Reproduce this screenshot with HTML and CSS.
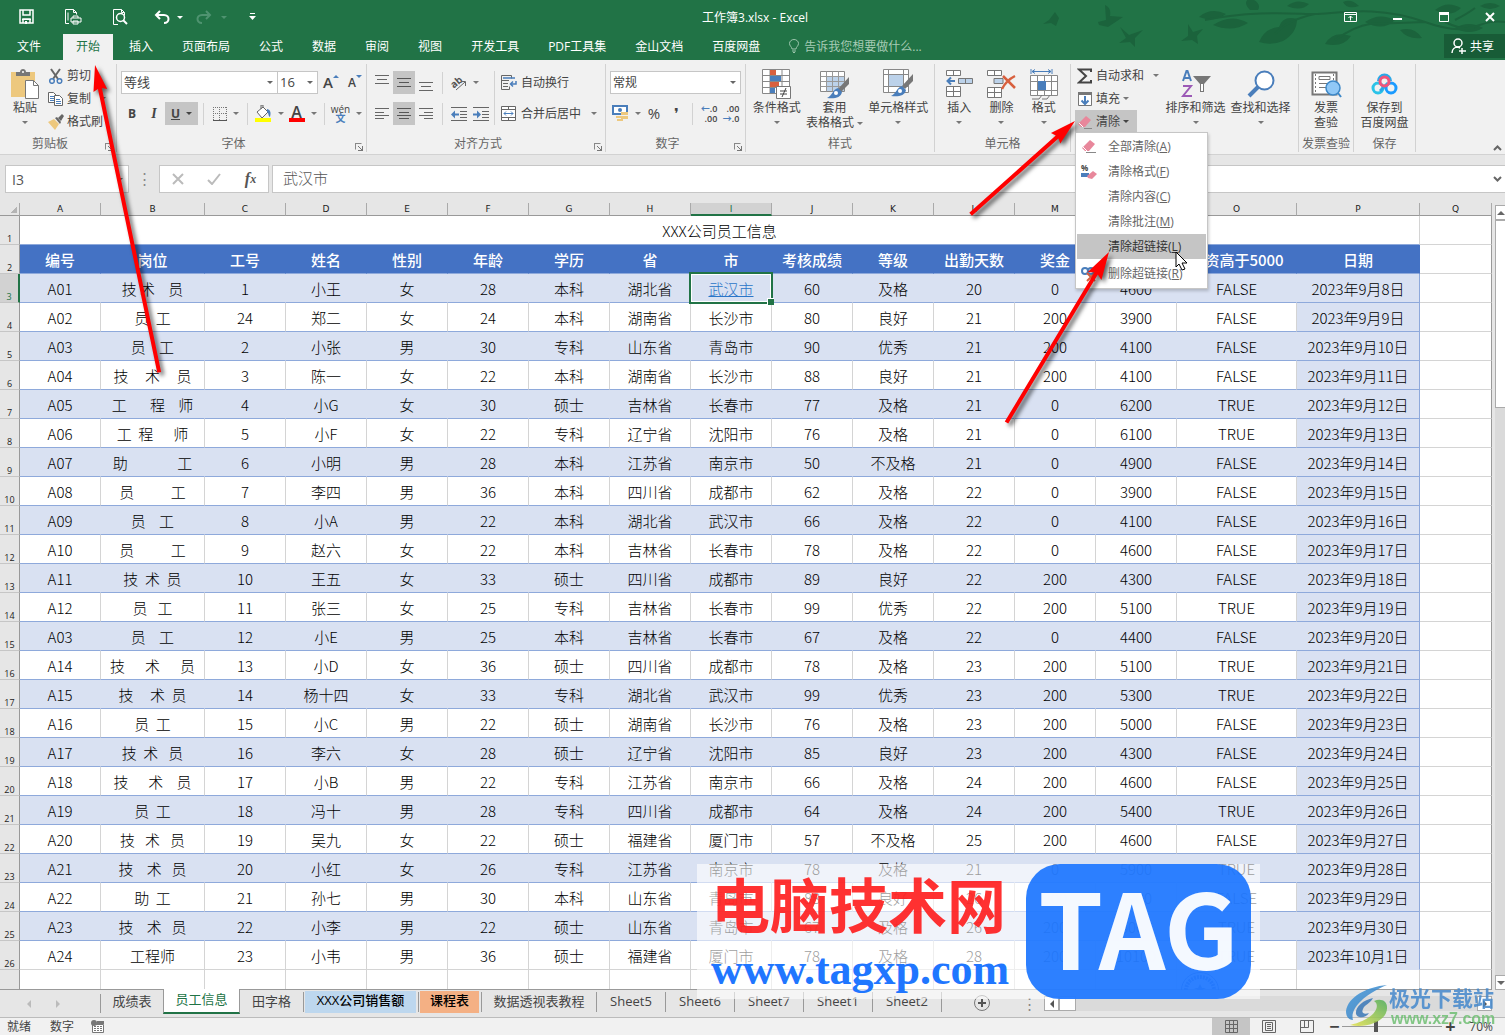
FILE: index.html
```html
<!DOCTYPE html>
<html lang="zh-CN">
<head>
<meta charset="utf-8">
<title>工作簿3.xlsx - Excel</title>
<link rel="stylesheet" href="styles.css">
</head>
<body>
<header class="top">
  <svg class="decor" width="480" height="60" viewBox="0 0 480 60" aria-hidden="true">
    <g fill="#1b633c">
      <path d="M80 5c5 2 6 7 5 11l13 1-9 6-6 4-9-2-1-3 8-2z"/>
      <path d="M95 27l9 8 14-5-8 8 0 9-5-5-11 1 7-5z"/>
      <path d="M163 24l5 8 10-3-6 7 1 8-6-4-11 1 7-5z"/>
      <path d="M30 12l4 6-3 8-5-3-8 1 6-4z"/>
      <path d="M174 17q12-10 27-3q-12 9-27 3zM188 25q18-12 35-2q-16 10-35 2zM225 10q-8-8 0-12q12 5 8 12zM234 42q6-14 20-15q4-12 18-8q0 14-14 22q-12 5-24 1zM300 44q8-14 26-8q-8 12-26 8zM340 22q14-10 30-2q-12 12-30 2zM375 30q14-4 22 8q-14 2-22-8zM262 6q10-8 22-2q-8 8-22 2zM410 10q12-10 26-2q-10 10-26 2zM318 2q8-4 16 4q-12 4-16-4zM430 28q14-8 28 0q-14 8-28 0zM455 6q10-6 20 0q-10 6-20 0z"/>
    </g>
    <path d="M180 20C230 10 270 14 290 14S350 4 400 22S450 18 480 22M250 34Q262 20 290 14M310 40Q330 26 345 24L400 22M420 22q16 8 30 7M430 20q12-6 20-12" fill="none" stroke="#1b633c" stroke-width="2"/>
  </svg>
  <div class="titlebar">
    <div class="quick">
      <button class="q-save" aria-label="保存"><svg width="16" height="16" viewBox="0 0 16 16"><path d="M1 1h13v13H1zM4 1v5h7V1M4 14v-4h7v4" fill="none" stroke="#fff" stroke-width="1.500"/><path d="M3 10h9v1H3zM6 12h2v3H6z" fill="#fff"/></svg></button>
      <button class="q-print" aria-label="打印"><svg width="17" height="16" viewBox="0 0 17 16" fill="none" stroke="#fff"><path d="M4 14.500H.5V.500h8l3 3v2M8.500.500v3h3M3 3.500v8"/><path d="M6 9h10v4H6zM8 9V7h5v2M8 12h5v3H8z"/></svg></button>
      <button class="q-preview" aria-label="打印预览"><svg width="15" height="16" viewBox="0 0 15 16" fill="none" stroke="#fff"><path d="M5 15.500H.5V.500h8l3 3v3M8.500.500v3h3"/><circle cx="7.500" cy="8.500" r="4" stroke-width="1.500"/><path d="M10 11l4 4" stroke-width="2"/></svg></button>
      <button class="q-undo" aria-label="撤销"><svg width="17" height="14" viewBox="0 0 17 14" fill="none" stroke="#fff" stroke-width="2"><path d="M6 1L2 5l4 4M2 5h8c6 0 6 8 0 8"/></svg></button>
      <span class="caret white"></span>
      <button class="q-redo" aria-label="恢复"><svg width="17" height="14" viewBox="0 0 17 14" fill="none" stroke="#4f9370" stroke-width="2"><path d="M10 1l4 4-4 4M14 5H6c-6 0-6 8 0 8"/></svg></button>
      <span class="caret dim"></span>
      <button class="q-more" aria-label="自定义快速访问工具栏"><svg width="7" height="8" viewBox="0 0 7 8"><path d="M1 0h5v1H1zM0 3h7L3.500 7z" fill="#fff"/></svg></button>
    </div>
    <div class="doc-title">工作簿3.xlsx - Excel</div>
    <div class="win">
      <button aria-label="功能区显示选项"><svg width="13" height="10" viewBox="0 0 13 10" fill="none" stroke="#fff"><path d="M.5.500h12v9H.5zM.5 2.500h12M6.500 8.500V4M4.500 6l2-2 2 2"/></svg></button>
      <button aria-label="最小化"><svg width="10" height="10"><path d="M0 6h9v2H0z" fill="#fff"/></svg></button>
      <button aria-label="最大化"><svg width="10" height="10"><path d="M.5.500h9v9H.5z" fill="none" stroke="#fff"/><path d="M0 0h10v3H0z" fill="#fff"/></svg></button>
      <button aria-label="关闭"><svg width="10" height="10"><path d="M1 1l8 8M9 1l-8 8" stroke="#fff" stroke-width="2"/></svg></button>
    </div>
  </div>
  <nav class="tabs">
    <button class="file">文件</button>
    <button class="active">开始</button>
    <button>插入</button><button>页面布局</button><button>公式</button><button>数据</button><button>审阅</button><button>视图</button><button>开发工具</button><button>PDF工具集</button><button>金山文档</button><button>百度网盘</button>
    <button class="tell"><svg width="10" height="14" viewBox="0 0 10 14" fill="none" stroke="#9cc5ac"><path d="M3 10c0-2-2.500-3-2.500-5.500a4.500 4 0 0 1 9 0C9.500 7 7 8 7 10zM3 12h4M4 13.500h2"/></svg>告诉我您想要做什么...</button>
    <button class="share"><svg width="16" height="16" viewBox="0 0 16 16" fill="none" stroke="#fff" stroke-width="1.500"><circle cx="7" cy="5" r="4"/><path d="M1 15c0-4 3-6 6-6l2 1M11 10v6M8 13h7"/></svg>共享</button>
  </nav>
</header>

<section class="ribbon">
  <div class="group g-clip">
    <div class="body">
      <button class="big paste"><span class="pic"><svg width="29" height="30" viewBox="0 0 29 30"><path d="M0 3h24v25H0z" fill="#edc87e"/><path d="M5 7V3h4c0-4 6-4 6 0h4v4z" fill="#777"/><circle cx="12" cy="3" r="1" fill="#fff"/><path d="M14.500 11.500h8l5 5v13h-13z" fill="#fff" stroke="#777"/><path d="M22.500 11.500v5h5" fill="none" stroke="#777"/></svg></span>粘贴<span class="caret"></span></button>
      <div class="list">
        <button><svg width="16" height="16" viewBox="0 0 16 16" fill="none"><path d="M3 1l7 10M12 1L5 11" stroke="#666" stroke-width="2"/><circle cx="4" cy="13" r="2.300" stroke="#4a7ebb" stroke-width="1.500"/><circle cx="11.500" cy="13" r="2.300" stroke="#4a7ebb" stroke-width="1.500"/></svg>剪切</button>
        <button><svg width="16" height="16" viewBox="0 0 16 16" fill="#fff" stroke="#666"><path d="M.5 1.500h5l3 3v7h-8z"/><path d="M2 5.500h4M2 7.500h4M2 9.500h4" stroke="#4a7ebb"/><path d="M6.500 4.500h5l3 3v7h-8z"/><path d="M8 8.500h4M8 10.500h5M8 12.500h5" stroke="#4a7ebb"/></svg>复制<span class="caret far"></span></button>
        <button><svg width="16" height="16" viewBox="0 0 16 16"><path d="M0 8l6-3 5 5-4 6z" fill="#edc87e"/><path d="M7 4l2-1 4 5-1 2zM10 4l4-4 2 2-3 5z" fill="#666"/></svg>格式刷</button>
      </div>
    </div>
    <div class="name">剪贴板<span class="launch"></span></div>
  </div>

  <div class="group g-font">
    <div class="body rows">
      <div class="row">
        <span class="sel w-font"><select aria-label="字体"><option>等线</option></select></span><span class="sel w-size"><select aria-label="字号"><option>16</option></select></span>
        <button class="t22 glyph" aria-label="增大字号">A<i class="up"></i></button><button class="t22 glyph small" aria-label="减小字号">A<i class="down"></i></button>
      </div>
      <div class="row">
        <button class="t22 b">B</button><button class="t22 i">I</button><button class="t33 u on"><u>U</u><span class="caret dark"></span></button>
        <span class="vs"></span>
        <button class="t33" aria-label="边框"><svg width="14" height="14" viewBox="0 0 14 14"><path d="M.5 0v13M6.500 0v13M13.500 0v13M0 .5h14M0 6.500h14" stroke="#777" stroke-dasharray="1 1"/><path d="M0 13.500h14" stroke="#555"/></svg><span class="caret"></span></button>
        <span class="vs"></span>
        <button class="t33" aria-label="填充颜色"><svg width="17" height="17" viewBox="0 0 17 17"><path d="M2 7l6-5 5 5-6 6z" fill="#fff" stroke="#666"/><path d="M6 4V0h2v3" fill="none" stroke="#666"/><path d="M12 4c4 1 4 4 3 8-2-1-1-4-3-5z" fill="#4a7ebb"/><path d="M0 13h16v4H0z" fill="#ff0"/></svg><span class="caret"></span></button>
        <button class="t33" aria-label="字体颜色"><span class="fontcolor">A</span><span class="caret"></span></button>
        <span class="vs"></span>
        <button class="t33" aria-label="拼音"><span class="pinyin">wén<b>文</b></span><span class="caret"></span></button>
      </div>
    </div>
    <div class="name">字体<span class="launch"></span></div>
  </div>

  <div class="group g-align">
    <div class="body">
      <div class="rows">
        <div class="row">
          <button class="t22" aria-label="顶端对齐"><svg width="14" height="17"><path d="M0 1.500h14M2 5.500h10M0 9.500h14" stroke="#666"/></svg></button>
          <button class="t22 on" aria-label="垂直居中"><svg width="14" height="17"><path d="M0 4.500h14M2 8.500h10M0 12.500h14" stroke="#555"/></svg></button>
          <button class="t22" aria-label="底端对齐"><svg width="14" height="17"><path d="M0 8.500h14M2 12.500h10M0 16.500h14" stroke="#666"/></svg></button>
          <span class="vs"></span>
          <button class="t33" aria-label="方向"><svg class="spill" width="17" height="16" viewBox="0 0 17 16"><text x="1" y="12" font-family="Open Sans" font-size="10" font-weight="700" fill="#555" transform="rotate(-40 5 9)">ab</text><path d="M6 15l9-8M11 6.500h4.500V11" fill="none" stroke="#666"/></svg><span class="caret"></span></button>
        </div>
        <div class="row">
          <button class="t22" aria-label="左对齐"><svg width="14" height="14"><path d="M0 1.500h14M0 5.500h9M0 8.500h14M0 11.500h9" stroke="#666"/></svg></button>
          <button class="t22 on" aria-label="居中"><svg width="14" height="14"><path d="M0 1.500h14M2 5.500h10M0 8.500h14M2 11.500h10" stroke="#555"/></svg></button>
          <button class="t22" aria-label="右对齐"><svg width="14" height="14"><path d="M0 1.500h14M5 5.500h9M0 8.500h14M5 11.500h9" stroke="#666"/></svg></button>
          <span class="vs"></span>
          <button class="t22" aria-label="减少缩进量"><svg width="16" height="14"><path d="M0 .5h16M9 4.500h7M9 7.500h7M9 10.500h7M0 13.500h16" stroke="#666"/><path d="M0 7.500l4-4v3h4v2H4v3z" fill="#4a7ebb"/></svg></button>
          <button class="t22" aria-label="增加缩进量"><svg width="16" height="14"><path d="M0 .5h16M9 4.500h7M9 7.500h7M9 10.500h7M0 13.500h16" stroke="#666"/><path d="M8 7.500l-4-4v3H0v2h4v3z" fill="#4a7ebb"/></svg></button>
        </div>
      </div>
      <div class="rows wraps">
        <button class="row"><svg width="16" height="16" viewBox="0 0 16 16" fill="none" stroke="#666"><path d="M.5.500h10v3M.5.500v14h8v-3M0 5.500h8M2 8.500h5M2 11.500h5"/><path d="M2 3h12M15 6v3h-5M12 6.500L9.500 9l2.500 2.500" stroke="#4a7ebb" stroke-width="1.500"/></svg>自动换行</button>
        <button class="row"><svg width="16" height="16" viewBox="0 0 16 16" fill="#fff" stroke="#666"><path d="M.5.500h14v14H.5zM.5 3.500h14M.5 11.500h14M7.500.500v3M7.500 11.500v3"/><path d="M3 7.500h9M5 5.500l-2 2 2 2M10 5.500l2 2-2 2" fill="none" stroke="#4a7ebb"/></svg>合并后居中<span class="caret"></span></button>
      </div>
    </div>
    <div class="name">对齐方式<span class="launch"></span></div>
  </div>

  <div class="group g-num">
    <div class="body rows">
      <div class="row"><span class="sel w-num"><select aria-label="数字格式"><option>常规</option></select></span></div>
      <div class="row">
        <button class="t33" aria-label="会计数字格式"><svg width="17" height="17" viewBox="0 0 17 17"><path d="M1 1h14v8H1z" fill="#fff" stroke="#4a7ebb" stroke-width="2"/><circle cx="8" cy="5" r="2" fill="#4a7ebb"/><path d="M9 7h7v3H9zM4 11h7v2H4zM9 11h7v3H9zM5 14h6v2H5z" fill="#edc87e"/></svg><span class="caret"></span></button>
        <button class="t22 pct">%</button><button class="t22 comma" aria-label="千位分隔样式">❜</button>
        <span class="vs"></span>
        <button class="t22 dec"><span><i>←</i>.0<br>.00</span></button><button class="t22 dec"><span>.00<br><i>→</i>.0</span></button>
      </div>
    </div>
    <div class="name">数字<span class="launch"></span></div>
  </div>

  <div class="group g-style">
    <div class="body">
      <button class="big"><span class="pic"><svg width="30" height="30" viewBox="0 0 30 30"><path d="M.5.500h27v24H.5zM.5 6.500h27M.5 12.500h27M.5 18.500h27M8 .5v24M20 .5v24" fill="#fff" stroke="#888"/><path d="M8 1h6v5H8zM8 13h9v5H8z" fill="#d8603e"/><path d="M8 7h11v5H8zM8 19h5v5H8z" fill="#4a7ebb"/><path d="M14.500 17.500h14v12h-14z" fill="#fff" stroke="#777"/><path d="M18 22h7M18 25h7M24 19l-4 9" stroke="#444"/></svg></span>条件格式<span class="caret"></span></button>
      <button class="big"><span class="pic"><svg width="30" height="30" viewBox="0 0 30 30"><path d="M.5 2.500h24v20H.5z" fill="#fff" stroke="#888"/><path d="M6 8h18v14H6z" fill="#bcd2ea"/><path d="M.5 7.500h24M.5 12.500h24M.5 17.500h24M6.500 2.500v20M12.500 2.500v20M18.500 2.500v20" stroke="#999"/><path d="M29 8v7l-8 8-3-3z" fill="#777"/><path d="M18 19l4 4c-1 6-8 7-15 6 5-2 6-9 11-10z" fill="#4a7ebb"/><circle cx="16" cy="24" r="2" fill="#fff"/></svg></span>套用<span>表格格式 <i class="caret inl"></i></span></button>
      <button class="big"><span class="pic"><svg width="30" height="30" viewBox="0 0 30 30"><path d="M.5.500h25v23H.5zM.5 5.500h25M.5 17.500h25M5.500.500v23M20.500.500v23" fill="#fff" stroke="#888"/><path d="M6 6h14v11H6z" fill="#bcd2ea"/><path d="M30 5v7l-8 8-3-3z" fill="#777"/><path d="M19 17l4 4c-1 6-8 7-15 6 5-2 6-9 11-10z" fill="#4a7ebb"/><circle cx="17" cy="22" r="2" fill="#fff"/></svg></span>单元格样式<span class="caret"></span></button>
    </div>
    <div class="name">样式</div>
  </div>

  <div class="group g-cells">
    <div class="body">
      <button class="big"><span class="pic"><svg width="27" height="30" viewBox="0 0 27 30"><path d="M.5 1.500h14v5H.5zM7.500 1.500v5M.5 17.500h14v10H.5zM.5 22.500h14M7.500 17.500v10" fill="#fff" stroke="#777"/><path d="M12.500 9.500h14v5h-14zM19.500 9.500v5" fill="#bcd2ea" stroke="#777"/><path d="M1 12h8M5 8.500L1.500 12 5 15.500" fill="none" stroke="#4a7ebb" stroke-width="2"/></svg></span>插入<span class="caret"></span></button>
      <button class="big"><span class="pic"><svg width="29" height="30" viewBox="0 0 29 30"><path d="M.5 1.500h14v5H.5zM7.500 1.500v5M.5 18.500h14v10H.5zM.5 23.500h14M7.500 18.500v10" fill="#fff" stroke="#777"/><path d="M7 9.500h9v5H7z" fill="#bcd2ea" stroke="#777"/><path d="M16 7l12 12M28 7C22 10 18 14 15 20" fill="none" stroke="#d8603e" stroke-width="2.500"/></svg></span>删除<span class="caret"></span></button>
      <button class="big"><span class="pic"><svg width="28" height="31" viewBox="0 0 28 31"><path d="M.5 6.500h27v20H.5zM.5 12.500h27M.5 21.500h27M7.500 6.500v20M21.500 6.500v20M14.500 6.500v20" fill="#fff" stroke="#888"/><path d="M8 12h8v9H8z" fill="#4a7ebb"/><path d="M1 0v5M22 0v5M2 2.500h19M5 .5l-3 2 3 2M18 .5l3 2-3 2" fill="none" stroke="#4a7ebb"/><path d="M2 30h7l3-4M12 30h5l3-4" fill="none" stroke="#777"/></svg></span>格式<span class="caret"></span></button>
    </div>
    <div class="name">单元格</div>
  </div>

  <div class="group g-edit">
    <div class="body">
      <div class="list">
        <button><svg width="16" height="16" viewBox="0 0 16 16"><path d="M14 4V1.500H2L9 8l-7 6.500h12V12" fill="none" stroke="#444" stroke-width="2"/></svg>自动求和<span class="caret far"></span></button>
        <button><svg width="16" height="16" viewBox="0 0 16 16"><path d="M1.500 1.500h13v13h-13z" fill="#fff" stroke="#777"/><path d="M1 1h14v3H1z" fill="#777"/><path d="M8 5v8M4.500 9.500L8 13l3.500-3.500" fill="none" stroke="#4a7ebb" stroke-width="2"/></svg>填充<span class="caret"></span></button>
        <div class="drop">
          <button class="on"><svg width="16" height="16" viewBox="0 0 16 16"><path d="M9 2l5 4-6 7H4l-3-3z" fill="#e8879b"/><path d="M2 9l4 4" stroke="#fff"/><path d="M7 14.500h8" stroke="#888"/></svg>清除<span class="caret dark"></span></button>
          <ul class="menu">
            <li><button><svg width="16" height="16" viewBox="0 0 16 16"><path d="M9 1l5 4-6 7H4l-3-3z" fill="#e8879b"/><path d="M2 8l4 4" stroke="#fff"/><path d="M5 13.500h10" stroke="#888"/></svg>全部清除(<u>A</u>)</button></li>
            <li><button><svg class="spill" width="16" height="16" viewBox="0 0 16 16"><text x="0" y="7" font-family="Open Sans" font-size="8" font-weight="700" fill="#444">%</text><path d="M0 9h8v4H0z" fill="#4a7ebb"/><path d="M12 7l4 3-5 5-4-1-1-2z" fill="#e8879b"/></svg>清除格式(<u>F</u>)</button></li>
            <li><button><i class="noicon"></i>清除内容(<u>C</u>)</button></li>
            <li><button><i class="noicon"></i>清除批注(<u>M</u>)</button></li>
            <li class="hot"><button><i class="noicon"></i>清除超链接(<u>L</u>)</button></li>
            <li class="last"><button><svg width="16" height="16" viewBox="0 0 16 16" fill="none"><circle cx="4" cy="5" r="3" stroke="#4a7ebb" stroke-width="2"/><circle cx="10" cy="5" r="3" stroke="#4a7ebb" stroke-width="2"/><path d="M6 7l8 8M14 7l-8 8" stroke="#d8603e" stroke-width="2"/></svg>删除超链接(<u>R</u>)</button></li>
          </ul>
        </div>
      </div>
      <button class="big"><span class="pic"><svg width="30" height="30" viewBox="0 0 30 30"><path d="M2 12L5.500 2h1L10 12M3.500 9h5" fill="none" stroke="#4a7ebb" stroke-width="2"/><path d="M2 17h8L2 27h9" fill="none" stroke="#9b59b6" stroke-width="2"/><path d="M12 7h18l-7 8v8h-4v-8z" fill="#777"/><path d="M20 15h2v7h-2z" fill="#fff"/></svg></span>排序和筛选<span class="caret"></span></button>
      <button class="big"><span class="pic"><svg width="28" height="28" viewBox="0 0 28 28"><circle cx="17.500" cy="10.500" r="9" fill="#fff" stroke="#4a7ebb" stroke-width="2"/><path d="M11 17l-9 9" stroke="#4a7ebb" stroke-width="4"/></svg></span>查找和选择<span class="caret"></span></button>
    </div>
    <div class="name"></div>
  </div>

  <div class="group g-inv">
    <div class="body"><button class="big"><span class="pic"><svg width="31" height="27" viewBox="0 0 31 27"><path d="M1.500 1.500h24v22h-24z" fill="#fff" stroke="#777" stroke-width="2"/><path d="M4.500 3v20M22.500 3v20" stroke="#777" stroke-dasharray="2 2"/><path d="M8 5.500h11v3H8zM8 12.500h8M8 16.500h8" fill="none" stroke="#777"/><circle cx="22" cy="17" r="7" fill="#90c8f6" stroke="#3d88c8" stroke-width="1.500"/><path d="M27 22l3 4" stroke="#3d88c8" stroke-width="2"/></svg></span>发票<span>查验</span></button></div>
    <div class="name">发票查验</div>
  </div>
  <div class="group g-save">
    <div class="body"><button class="big"><span class="pic"><svg width="27" height="22" viewBox="0 0 27 22" fill="none" stroke-width="3"><circle cx="7" cy="15" r="5" stroke="#2bc3e8"/><circle cx="20" cy="15" r="5" stroke="#1b9bff"/><path d="M7.500 8a6 6 0 0 1 12 0" stroke="#2aa9e8"/><path d="M9 18l8-8" stroke="#2aa9e8"/><circle cx="13.500" cy="8.500" r="4.500" stroke="#f0557b"/></svg></span>保存到<span>百度网盘</span></button></div>
    <div class="name">保存</div>
  </div>
  <button class="collapse" aria-label="折叠功能区"><svg width="9" height="6"><path d="M1 5l3.500-3.500L8 5" fill="none" stroke="#666" stroke-width="2"/></svg></button>
</section>

<section class="formula">
  <span class="namebox"><input value="I3" aria-label="名称框"><span class="caret"></span></span>
  <span class="dots">⋮</span>
  <span class="fx">
    <button aria-label="取消"><svg width="12" height="12"><path d="M1 1l10 10M11 1L1 11" stroke="#bbb" stroke-width="2"/></svg></button>
    <button aria-label="输入"><svg width="14" height="12"><path d="M1 7l4 4 8-10" fill="none" stroke="#bbb" stroke-width="2"/></svg></button>
    <button class="f"><i>f</i>x</button>
  </span>
  <input class="finput" value="武汉市" aria-label="编辑栏">
  <button class="expand" aria-label="展开编辑栏"><svg width="9" height="6"><path d="M1 1l3.500 3.500L8 1" fill="none" stroke="#666" stroke-width="2"/></svg></button>
</section>

<main class="sheet">
<table>
<colgroup><col class="ch"><col class="cn"><col class="cb"><col class="cn"><col class="cn"><col class="cn"><col class="cn"><col class="cn"><col class="cn"><col class="cn"><col class="cn"><col class="cn"><col class="cn"><col class="cn"><col class="cn"><col class="co"><col class="cp"><col></colgroup>
<thead><tr><th class="corner"><th>A<th>B<th>C<th>D<th>E<th>F<th>G<th>H<th class="cur">I<th>J<th>K<th>L<th>M<th>N<th>O<th>P<th>Q</tr></thead>
<tbody>
<tr class="title"><th>1<td colspan="16">XXX公司员工信息<td></tr>
<tr class="head"><th>2<td>编号<td>岗位<td>工号<td>姓名<td>性别<td>年龄<td>学历<td>省<td>市<td>考核成绩<td>等级<td>出勤天数<td>奖金<td>工资<td>工资高于5000<td>日期<td></tr>
<tr class="cur"><th>3<td>A01<td>技 术    员<td>1<td>小王<td>女<td>28<td>本科<td>湖北省<td class="picked"><a href="#">武汉市</a><td>60<td>及格<td>20<td>0<td>4600<td>FALSE<td>2023年9月8日<td></tr>
<tr><th>4<td>A02<td>员  工<td>24<td>郑二<td>女<td>24<td>本科<td>湖南省<td>长沙市<td>80<td>良好<td>21<td>200<td>3900<td>FALSE<td>2023年9月9日<td></tr>
<tr><th>5<td>A03<td>员    工<td>2<td>小张<td>男<td>30<td>专科<td>山东省<td>青岛市<td>90<td>优秀<td>21<td>200<td>4100<td>FALSE<td>2023年9月10日<td></tr>
<tr><th>6<td>A04<td>技     术     员<td>3<td>陈一<td>女<td>22<td>本科<td>湖南省<td>长沙市<td>88<td>良好<td>21<td>200<td>4100<td>FALSE<td>2023年9月11日<td></tr>
<tr><th>7<td>A05<td>工       程    师<td>4<td>小G<td>女<td>30<td>硕士<td>吉林省<td>长春市<td>77<td>及格<td>21<td>0<td>6200<td>TRUE<td>2023年9月12日<td></tr>
<tr><th>8<td>A06<td>工  程      师<td>5<td>小F<td>女<td>22<td>专科<td>辽宁省<td>沈阳市<td>76<td>及格<td>21<td>0<td>6100<td>TRUE<td>2023年9月13日<td></tr>
<tr><th>9<td>A07<td>助               工<td>6<td>小明<td>男<td>28<td>本科<td>江苏省<td>南京市<td>50<td>不及格<td>21<td>0<td>4900<td>FALSE<td>2023年9月14日<td></tr>
<tr><th>10<td>A08<td>员           工<td>7<td>李四<td>男<td>36<td>本科<td>四川省<td>成都市<td>62<td>及格<td>22<td>0<td>3900<td>FALSE<td>2023年9月15日<td></tr>
<tr><th>11<td>A09<td>员    工<td>8<td>小A<td>男<td>22<td>本科<td>湖北省<td>武汉市<td>66<td>及格<td>22<td>0<td>4100<td>FALSE<td>2023年9月16日<td></tr>
<tr><th>12<td>A10<td>员           工<td>9<td>赵六<td>女<td>22<td>本科<td>吉林省<td>长春市<td>78<td>及格<td>22<td>0<td>4600<td>FALSE<td>2023年9月17日<td></tr>
<tr><th>13<td>A11<td>技  术  员<td>10<td>王五<td>女<td>33<td>硕士<td>四川省<td>成都市<td>89<td>良好<td>22<td>200<td>4300<td>FALSE<td>2023年9月18日<td></tr>
<tr><th>14<td>A12<td>员   工<td>11<td>张三<td>女<td>25<td>专科<td>吉林省<td>长春市<td>99<td>优秀<td>22<td>200<td>5100<td>TRUE<td>2023年9月19日<td></tr>
<tr><th>15<td>A03<td>员    工<td>12<td>小E<td>男<td>25<td>本科<td>吉林省<td>长春市<td>67<td>及格<td>22<td>0<td>4400<td>FALSE<td>2023年9月20日<td></tr>
<tr><th>16<td>A14<td>技      术      员<td>13<td>小D<td>女<td>36<td>硕士<td>四川省<td>成都市<td>78<td>及格<td>23<td>200<td>5100<td>TRUE<td>2023年9月21日<td></tr>
<tr><th>17<td>A15<td>技     术  员<td>14<td>杨十四<td>女<td>33<td>专科<td>湖北省<td>武汉市<td>99<td>优秀<td>23<td>200<td>5300<td>TRUE<td>2023年9月22日<td></tr>
<tr><th>18<td>A16<td>员  工<td>15<td>小C<td>男<td>22<td>硕士<td>湖南省<td>长沙市<td>76<td>及格<td>23<td>200<td>5000<td>FALSE<td>2023年9月23日<td></tr>
<tr><th>19<td>A17<td>技  术   员<td>16<td>李六<td>女<td>28<td>硕士<td>辽宁省<td>沈阳市<td>85<td>良好<td>23<td>200<td>4300<td>FALSE<td>2023年9月24日<td></tr>
<tr><th>20<td>A18<td>技      术    员<td>17<td>小B<td>男<td>22<td>专科<td>江苏省<td>南京市<td>66<td>及格<td>24<td>200<td>4600<td>FALSE<td>2023年9月25日<td></tr>
<tr><th>21<td>A19<td>员  工<td>18<td>冯十<td>男<td>28<td>专科<td>四川省<td>成都市<td>64<td>及格<td>24<td>200<td>5400<td>TRUE<td>2023年9月26日<td></tr>
<tr><th>22<td>A20<td>技   术   员<td>19<td>吴九<td>女<td>22<td>硕士<td>福建省<td>厦门市<td>57<td>不及格<td>25<td>200<td>4600<td>FALSE<td>2023年9月27日<td></tr>
<tr><th>23<td>A21<td>技    术   员<td>20<td>小红<td>女<td>26<td>专科<td>江苏省<td>南京市<td>78<td>及格<td>21<td>0<td>5900<td>TRUE<td>2023年9月28日<td></tr>
<tr><th>24<td>A22<td>助  工<td>21<td>孙七<td>男<td>30<td>本科<td>山东省<td>青岛市<td>88<td>良好<td>26<td>200<td>4900<td>FALSE<td>2023年9月29日<td></tr>
<tr><th>25<td>A23<td>技    术   员<td>22<td>小李<td>男<td>22<td>硕士<td>山东省<td>青岛市<td>67<td>及格<td>26<td>200<td>6000<td>TRUE<td>2023年9月30日<td></tr>
<tr class="end"><th>26<td>A24<td>工程师<td>23<td>小韦<td>男<td>36<td>硕士<td>福建省<td>厦门市<td>78<td>及格<td>28<td>200<td>10100<td>TRUE<td>2023年10月1日<td></tr>
</tbody>
<tfoot><tr><th><td><td><td><td><td><td><td><td><td><td><td><td><td><td><td><td><td></tr></tfoot>
</table>
<div class="vscroll"><button class="sb" aria-label="向上滚动"><i class="tri-u"></i></button><div class="vthumb"></div><div class="vtrack"></div><button class="sb" aria-label="向下滚动"><i class="tri-d"></i></button></div>
</main>

<nav class="sheets">
  <div class="nav"><i class="tri-l"></i><i class="tri-r"></i></div>
  <button class="w63">成绩表</button><button class="active">员工信息</button><button class="w64">田字格</button>
  <button class="tint blue"><span>XXX公司销售额</span></button><button class="tint orange"><span>课程表</span></button>
  <button class="w115">数据透视表教程</button><button class="w69">Sheet5</button><button class="w69">Sheet6</button><button class="w69">Sheet7</button><button class="w69">Sheet1</button><button class="w69">Sheet2</button>
  <button class="add" aria-label="新工作表"><svg width="16" height="16" fill="none" stroke="#777"><circle cx="8" cy="8" r="7.500"/><path d="M8 4v8M4 8h8" stroke="#555" stroke-width="2"/></svg></button>
  <span class="dots">⋮</span>
  <div class="hscroll"><button class="hb" aria-label="向左滚动"><i class="tri-l dark"></i></button><div class="hthumb"></div><div class="htrack"></div><button class="hb" aria-label="向右滚动"><i class="tri-r dark"></i></button></div>
</nav>

<footer class="status">
  <span>就绪</span><span>数字</span>
  <svg width="13" height="13" viewBox="0 0 13 13"><path d="M1.500 4.500h11v8h-11z" fill="#fff" stroke="#777"/><path d="M6 1h7v3H6z" fill="#777"/><path d="M3 6.500h8M3 8.500h8M3 10.500h8" stroke="#777" stroke-dasharray="2 1"/><circle cx="3" cy="3" r="3" fill="#777"/></svg>
  <div class="views">
    <button class="on" aria-label="普通"><svg width="13" height="13" fill="none" stroke="#666"><path d="M.5.500h12v12H.5zM.5 4.500h12M.5 8.500h12M4.500.500v12M8.500.500v12"/></svg></button>
    <button aria-label="页面布局视图"><svg width="14" height="13" fill="none" stroke="#666"><path d="M.5.500h13v12H.5zM3.500 2.500h7v8h-7zM5 4.500h4M5 6.500h4M5 8.500h4"/></svg></button>
    <button aria-label="分页预览"><svg width="14" height="13" fill="none" stroke="#666"><path d="M.5.500h13v12H.5zM4.500.500v7M8.500.500v7M0 7.500h8.500"/></svg></button>
  </div>
  <button class="zbtn" aria-label="缩小">−</button>
  <input type="range" min="10" max="190" value="70" aria-label="缩放">
  <button class="zbtn" aria-label="放大">+</button>
  <span class="zoom">70%</span>
</footer>

<svg class="stamp" width="38" height="18" viewBox="0 0 38 18" fill="none" stroke="#1d3fa0" aria-hidden="true"><path d="M.5 18a18 17 0 0 1 37 0"/><path d="M5 18a14 13 0 0 1 28 0" stroke-width="4" stroke-dasharray="2 1"/><path d="M19 12l2 4h4l-4 2h-4l-4-2h4z" fill="#1d3fa0" stroke="none"/></svg>

<aside class="promo">
  <div class="promo-text"><div class="promo-cn">电脑技术网</div><div class="promo-url">www.tagxp.com</div></div>
  <div class="promo-logo">TAG</div>
</aside>

<aside class="site">
  <svg width="42" height="42" viewBox="0 0 42 42"><defs><linearGradient id="sw" x1="0" y1="0" x2="1" y2="1"><stop offset="0" stop-color="#3f9be0"/><stop offset="1" stop-color="#3a78b8"/></linearGradient><linearGradient id="sg" x1="0" y1="1" x2="1" y2="0"><stop offset="0" stop-color="#e4e04a"/><stop offset="1" stop-color="#4fae5a"/></linearGradient></defs><path d="M41 0C20 2 2 12 0 26c0 6 3 9 7 9-3-10 8-24 34-35z" fill="url(#sw)"/><path d="M4 40c16 4 38-4 37-18 0-6-6-9-13-6 7 4 2 18-24 24z" fill="url(#sg)"/><path d="M27 13c-10 2-18 9-17 16 1 4 9 5 13-1-5 2-8 0-6-4 2-5 7-5 10-11z" fill="#3a78b8"/></svg>
  <div><div class="site-cn">极光下载站</div><div class="site-url">www.xz7.com</div></div>
</aside>

<svg class="arrows" width="1200" height="440" viewBox="0 0 1200 440" aria-hidden="true">
  <g fill="#f00">
    <path transform="translate(95 65) rotate(-11.800)" d="M0 0l7 26-5-2v290h-4V24l-5 2z"/>
    <path transform="translate(1075 121) rotate(48.200)" d="M0 0l7 26-5-2v116h-4V24l-5 2z"/>
    <path transform="translate(1109 252) rotate(31)" d="M0 0l8 28-6-3v174h-4V25l-6 3z"/>
  </g>
</svg>
<svg class="cursor" width="14" height="21" viewBox="0 0 14 21" aria-hidden="true"><path d="M1 1v15l3-3 3 6 3-1-3-6h5z" fill="#fff" stroke="#000"/></svg>
</body>
</html>
```

FILE: styles.css
```css
* { box-sizing: border-box; }
body {
  margin: 0;
  min-height: 100vh;
  position: relative;
  display: flex;
  flex-direction: column;
  overflow-x: hidden;
  background: #e6e6e6;
  color: #444;
  font: 12px/15px "Open Sans", "Noto Sans CJK SC", sans-serif;
}
button, input, select { font: inherit; color: inherit; }
button { display: flex; align-items: center; justify-content: center; padding: 0; border: 0; background: none; white-space: nowrap; }
svg { display: block; flex: none; }
.spill { overflow: visible; }
.caret { flex: none; width: 0; height: 0; border: 3px solid transparent; border-top-color: #777; border-bottom: 0; }
.caret.white { border-top-color: #fff; }
.caret.dim { border-top-color: #4f9370; }
.caret.dark { border-top-color: #444; }

/* Title bar and ribbon tabs */
.top { position: relative; background: #217346; color: #fff; }
.decor { position: absolute; right: 0; top: 0; }
.titlebar { position: relative; height: 34px; display: grid; grid-template-columns: 1fr auto 1fr; align-items: center; }
.quick { display: flex; align-items: center; padding-left: 19px; }
.q-print { margin-left: 30px; }
.q-preview { margin-left: 31px; }
.q-undo { margin-left: 26px; }
.q-undo + .caret { margin-left: 6px; }
.q-redo { margin-left: 13px; }
.q-redo + .caret { margin-left: 8px; }
.q-more { margin-left: 22px; }
.doc-title { padding-left: 5px; }
.win { display: flex; justify-content: flex-end; gap: 36px; padding-right: 10px; }
.tabs { position: relative; height: 26px; padding-bottom: 2px; display: flex; gap: 1px; }
.tabs button { padding: 0 14px; }
.tabs .file { padding: 0 17px; margin-right: 4px; }
.tabs .active { height: 26px; padding: 0 13px 2px; background: #f1f1f1; color: #217346; }
.tabs .active + button { padding-left: 15px; }
.tabs .tell { gap: 5px; color: #a6cbb5; }
.tabs .share { margin-left: auto; padding: 0 11px 0 7px; gap: 3px; background: #185c37; }

/* Ribbon */
.ribbon { display: flex; padding: 4px 0 2px; background: #f1f1f1; border-bottom: 1px solid #d2d2d2; }
.group { flex: none; border-right: 1px solid #d2d2d2; }
.body { display: flex; height: 70px; }
.name { position: relative; height: 18px; line-height: 19px; text-align: center; color: #666; }
.launch { position: absolute; right: 4px; bottom: 2px; width: 7px; height: 7px; border: 1px solid #888; border-right-color: transparent; border-bottom-color: transparent; }
.launch::after { content: ""; position: absolute; left: 2px; top: 2px; width: 4px; height: 4px; border-right: 1px solid #777; border-bottom: 1px solid #777; background: linear-gradient(45deg, transparent 40%, #777 40% 60%, transparent 60%); }
.g-clip { width: 117px; }
.g-font { width: 250px; }
.g-align { width: 239px; }
.g-num { width: 140px; }
.g-style { width: 189px; }
.g-cells { width: 136px; }
.g-edit { width: 228px; }
.g-inv { width: 55px; }
.g-save { width: 62px; }
.g-clip .name, .g-font .name, .g-num .name, .g-align .name { padding-right: 16px; }
.big { flex: 1; flex-direction: column; justify-content: flex-start; padding-top: 4px; }
.big .pic { display: flex; align-items: center; height: 32px; flex: none; }
.big .caret { margin-top: 6px; }
.big .inl { display: inline-block; margin: 0 0 2px 0; }
.paste { flex: none; width: 36px; margin: 0 5px 0 7px; }
.list { display: flex; flex-direction: column; }
.list > button, .drop > button { height: 23px; gap: 3px; justify-content: flex-start; }
.list .far { margin-left: 6px; }
.g-edit .list { width: 92px; padding-left: 4px; }
.g-edit .list > button, .drop > button { padding-left: 2px; }
.on { background: #c5c5c5; }
.g-style .body { padding: 0 3px 0 4px; }
.g-style .big { flex: auto; }
.g-cells .body { padding: 0 5px 0 3px; }
.g-edit .big { flex: none; width: 65px; }
.rows { display: flex; flex-direction: column; gap: 8px; padding-top: 7px; }
.row { display: flex; align-items: center; height: 23px; }
.g-font .rows, .g-num .rows { padding-left: 4px; }
.t22 { width: 22px; height: 23px; }
.t33 { width: 33px; height: 23px; gap: 6px; }
.vs { width: 1px; height: 22px; margin: 0 5px; background: #d2d2d2; }
.sel { position: relative; height: 23px; }
.sel::after { content: ""; position: absolute; right: 5px; top: 10px; border: 3px solid transparent; border-top-color: #666; border-bottom: 0; }
.sel select { width: 100%; height: 23px; padding: 0 2px; border: 1px solid #c6c6c6; background: #fff; appearance: none; border-radius: 0; }
.w-font { width: 157px; }
.w-size { width: 40px; }
.w-size select { border-left: 0; }
.w-size, .w-font { font-size: 13px; }
.w-num { width: 131px; }
.glyph { font-size: 15px; font-weight: 600; margin-left: 2px; }
.glyph.small { font-size: 12px; }
.glyph i { align-self: flex-start; margin-top: 4px; border: 3px solid transparent; }
.glyph .up { border-bottom-color: #4a7ebb; border-top: 0; }
.glyph .down { border-top-color: #4a7ebb; border-bottom: 0; }
.b, .u { font-weight: 700; }
.i { font-family: "Liberation Serif", serif; font-size: 14px; font-style: italic; font-weight: 700; }
.fontcolor { width: 16px; height: 17px; border-bottom: 4px solid #f00; font-size: 16px; font-weight: 600; line-height: 14px; }
.pinyin { display: flex; flex-direction: column; font-size: 10px; line-height: 9px; }
.pinyin b { color: #4a7ebb; }
.g-align .body { padding-left: 4px; }
.wraps { margin-left: 2px; padding-left: 7px; position: relative; }
.wraps::before { content: ""; position: absolute; left: 0; top: 7px; height: 54px; border-left: 1px solid #d2d2d2; }
.wraps .row { gap: 4px; justify-content: flex-start; }
.wraps .caret { margin-left: 6px; }
.pct { font-size: 15px; }
.comma { font-size: 15px; }
.dec { font-size: 9px; line-height: 10px; text-align: right; font-weight: 600; }
.dec i { color: #4a7ebb; font-style: normal; }
.collapse { margin: auto 3px 1px auto; }

/* Clear menu */
.drop { position: relative; width: 62px; }
.drop > button { width: 62px; }
.menu { position: absolute; z-index: 5; left: 0; top: 22px; width: 133px; margin: 0; padding: 1px; list-style: none; background: #fff; border: 1px solid #c6c6c6; box-shadow: 1px 2px 3px #0003; }
.menu button { width: 100%; height: 25px; justify-content: flex-start; padding-left: 4px; color: #666; }
.menu svg, .noicon { width: 16px; margin-right: 11px; }
.menu .hot { background: #c5c5c5; }
.menu .hot button { color: #333; }
.menu .last { padding: 2px 0 1px; }

/* Formula bar */
.formula { display: flex; height: 48px; padding-top: 10px; color: #555; }
.namebox { display: flex; align-items: center; width: 124px; height: 28px; margin-left: 5px; padding-right: 5px; border: 1px solid #c6c6c6; background: #fff; }
.namebox input { flex: 1; min-width: 0; padding: 0 6px; border: 0; background: none; font-size: 14px; }
.dots { width: 30px; line-height: 27px; text-align: center; font-size: 15px; color: #888; }
.fx { display: flex; align-items: center; justify-content: space-around; width: 110px; height: 28px; border: 1px solid #c6c6c6; background: #fff; }
.fx .f { font: italic 700 12px "Liberation Serif", serif; }
.fx .f i { font-size: 16px; }
.finput { flex: 1; min-width: 0; height: 28px; margin-left: 3px; padding: 0 10px 3px; border: 1px solid #c6c6c6; border-right: 0; background: #fff; font: 300 15px "Noto Sans CJK SC", sans-serif; }
.expand { width: 15px; height: 28px; margin-left: -15px; z-index: 1; }

/* Worksheet grid */
.sheet { flex: 1; display: flex; }
table { flex: 1; table-layout: fixed; width: 0; border-collapse: separate; border-spacing: 0; background: #fff; border-bottom: 1px solid #999; font: 300 15px/18px "Noto Sans CJK SC", sans-serif; color: #000; }
.ch { width: 20px; }
.cn { width: 81px; }
.cb { width: 104px; }
.co { width: 120px; }
.cp { width: 123px; }
th, td { padding: 0; }
th { background: #e6e6e6; font: 9px/11px "DejaVu Sans", sans-serif; color: #222; }
thead th { height: 13px; border-bottom: 1px solid #999; border-right: 1px solid #aaa; }
thead th.cur { background: #d2d2d2; border-bottom: 2px solid #217346; line-height: 10px; vertical-align: bottom; color: #217346; }
.corner { background: linear-gradient(135deg, transparent 50%, #b4b4b4 50%) 11px 4px / 6px 6px no-repeat #e6e6e6; }
tbody th { border-right: 1px solid #999; border-bottom: 1px solid #c6c6c6; vertical-align: bottom; font-family: "Open Sans", sans-serif; line-height: 10px; }
tbody .cur th { background: #d2d2d2; border-right: 2px solid #217346; color: #217346; }
td { height: 29px; padding-top: 2px; text-align: center; white-space: pre; border-right: 1px solid #d4d4d4; border-bottom: 1px solid #8ea9db; }
tbody td:nth-last-child(2) { border-right-color: #8ea9db; background: #d9e1f2; }
td:last-child { border-bottom-color: #d4d4d4; border-right-color: #999; }
tbody tr:nth-child(odd) td:not(:last-child) { background: #d9e1f2; }
tbody tr:nth-child(odd) td:not(:nth-last-child(-n+2)) { border-right-color: #d9e1f2; }
tbody .title td:nth-child(2) { background: #fff !important; border-right-color: #d4d4d4; }
tbody .head td:not(:last-child) { background: #4472c4; border-right-color: #4472c4; color: #fff; font-weight: 500; }
tbody .end td:not(:nth-last-child(2)) { border-bottom-color: #d4d4d4; }
tbody .end td:nth-last-child(2) { border-bottom-color: #d9e1f2; }
tfoot th { border-right: 1px solid #999; }
tfoot td { height: 19px; border-bottom: 0; }
.picked { position: relative; }
.picked a { color: #2a75c8; }
.picked::before { content: ""; position: absolute; inset: -2px; border: 2px solid #217346; outline: 1px solid #fff; outline-offset: -3px; }
.picked::after { content: ""; position: absolute; right: -3px; bottom: -3px; width: 6px; height: 6px; background: #217346; border: 1px solid #fff; border-right: 0; border-bottom: 0; }

/* Scroll bars */
.vscroll { display: flex; flex-direction: column; width: 13px; padding: 2px 0 0 3px; }
.sb { height: 15px; background: #fff; border: 1px solid #aaa; border-right: 0; }
.vthumb { height: 188px; background: #fff; border: 1px solid #aaa; border-right: 0; }
.vtrack { flex: 1; background: #dadada; }
.tri-u, .tri-d, .tri-l, .tri-r { border: 4px solid transparent; }
.tri-u { border-bottom-color: #666; border-top: 0; }
.tri-d { border-top-color: #666; border-bottom: 0; }
.tri-l { border-right-color: #bbb; border-left: 0; }
.tri-r { border-left-color: #bbb; border-right: 0; }
.tri-l.dark { border-right-color: #555; }
.tri-r.dark { border-left-color: #555; }

/* Sheet tabs */
.sheets { display: flex; height: 28px; padding-right: 13px; border-bottom: 1px solid #bbb; font-size: 13px; }
.nav { display: flex; align-items: center; gap: 25px; width: 101px; padding-left: 27px; border-right: 1px solid #999; margin: 4px 0; }
.sheets > button { flex: none; height: 20px; margin-top: 2px; padding-bottom: 2px; border-right: 1px solid #999; }
.sheets > .w63 { width: 62px; border-right: 0; }
.w64 { width: 64px; }
.w69 { width: 69px; }
.w115 { width: 115px; }
.sheets > .active { width: 77px; height: 25px; margin-top: -1px; background: #fff; border-left: 1px solid #999; border-bottom: 2px solid #217346; color: #217346; }
.sheets > .tint { padding: 0 2px 0 1px; }
.tint span { padding: 2px 0 5px; color: #000; font-weight: 500; }
.blue { width: 115px; }
.blue span { width: 112px; background: #bdd7ee; }
.orange { width: 63px; }
.orange span { width: 60px; background: #f4b084; }
.sheets > .add { width: 80px; border: 0; height: 24px; }
.sheets .dots { width: 12px; }
.hscroll { flex: 1; display: flex; height: 15px; margin: 6px 0 0 10px; background: #dadada; }
.hb { width: 15px; background: #fff; border: 1px solid #aaa; }
.hthumb { width: 17px; background: #fff; border: 1px solid #aaa; }
.htrack { flex: 1; }

/* Status bar */
.status { display: flex; align-items: center; height: 17px; padding: 0 12px 0 7px; background: #f1f1f1; }
.status > span + span { margin: 0 17px 0 19px; }
.views { display: flex; margin-left: auto; }
.views button { width: 38px; height: 17px; }
.zbtn { width: 16px; font-size: 18px; font-weight: 700; }
.status input { width: 100px; height: 15px; margin: 0; appearance: none; background: linear-gradient(#999, #999) center / 100% 1px no-repeat; }
.status input::-webkit-slider-thumb { appearance: none; width: 4px; height: 11px; background: #555; }
.status .zoom { margin: 0 0 0 11px; }

/* Overlays */
.stamp { position: absolute; left: 1181px; top: 972px; }
.promo { position: absolute; z-index: 6; left: 697px; top: 864px; width: 563px; height: 135px; display: flex; justify-content: space-between; padding-right: 9px; background: #ffffff99; }
.promo-text { padding-left: 14px; white-space: nowrap; }
.promo-cn { font: 700 59px/78px "Noto Sans CJK SC", sans-serif; color: #ff2020; opacity: .92; }
.promo-url { font: 700 44px/56px "Liberation Serif", serif; color: #1f76ff; }
.promo-logo { width: 225px; border-radius: 34px; background: #1672ffe6; color: #fffffff2; font: 700 104px/122px "Noto Sans CJK SC", sans-serif; text-align: center; }
.site { position: absolute; z-index: 6; left: 1346px; top: 985px; display: flex; gap: 1px; opacity: .85; }
.site-cn { font: 700 21px/24px "Noto Sans CJK SC", sans-serif; color: #4488cc; }
.site-url { padding-left: 2px; font: 700 16px/19px "Liberation Sans", sans-serif; color: #6fbf73; }
.arrows { position: absolute; z-index: 7; left: 0; top: 0; pointer-events: none; filter: drop-shadow(3px 3px 2px #0009); }
.cursor { position: absolute; z-index: 8; left: 1175px; top: 251px; }
```
